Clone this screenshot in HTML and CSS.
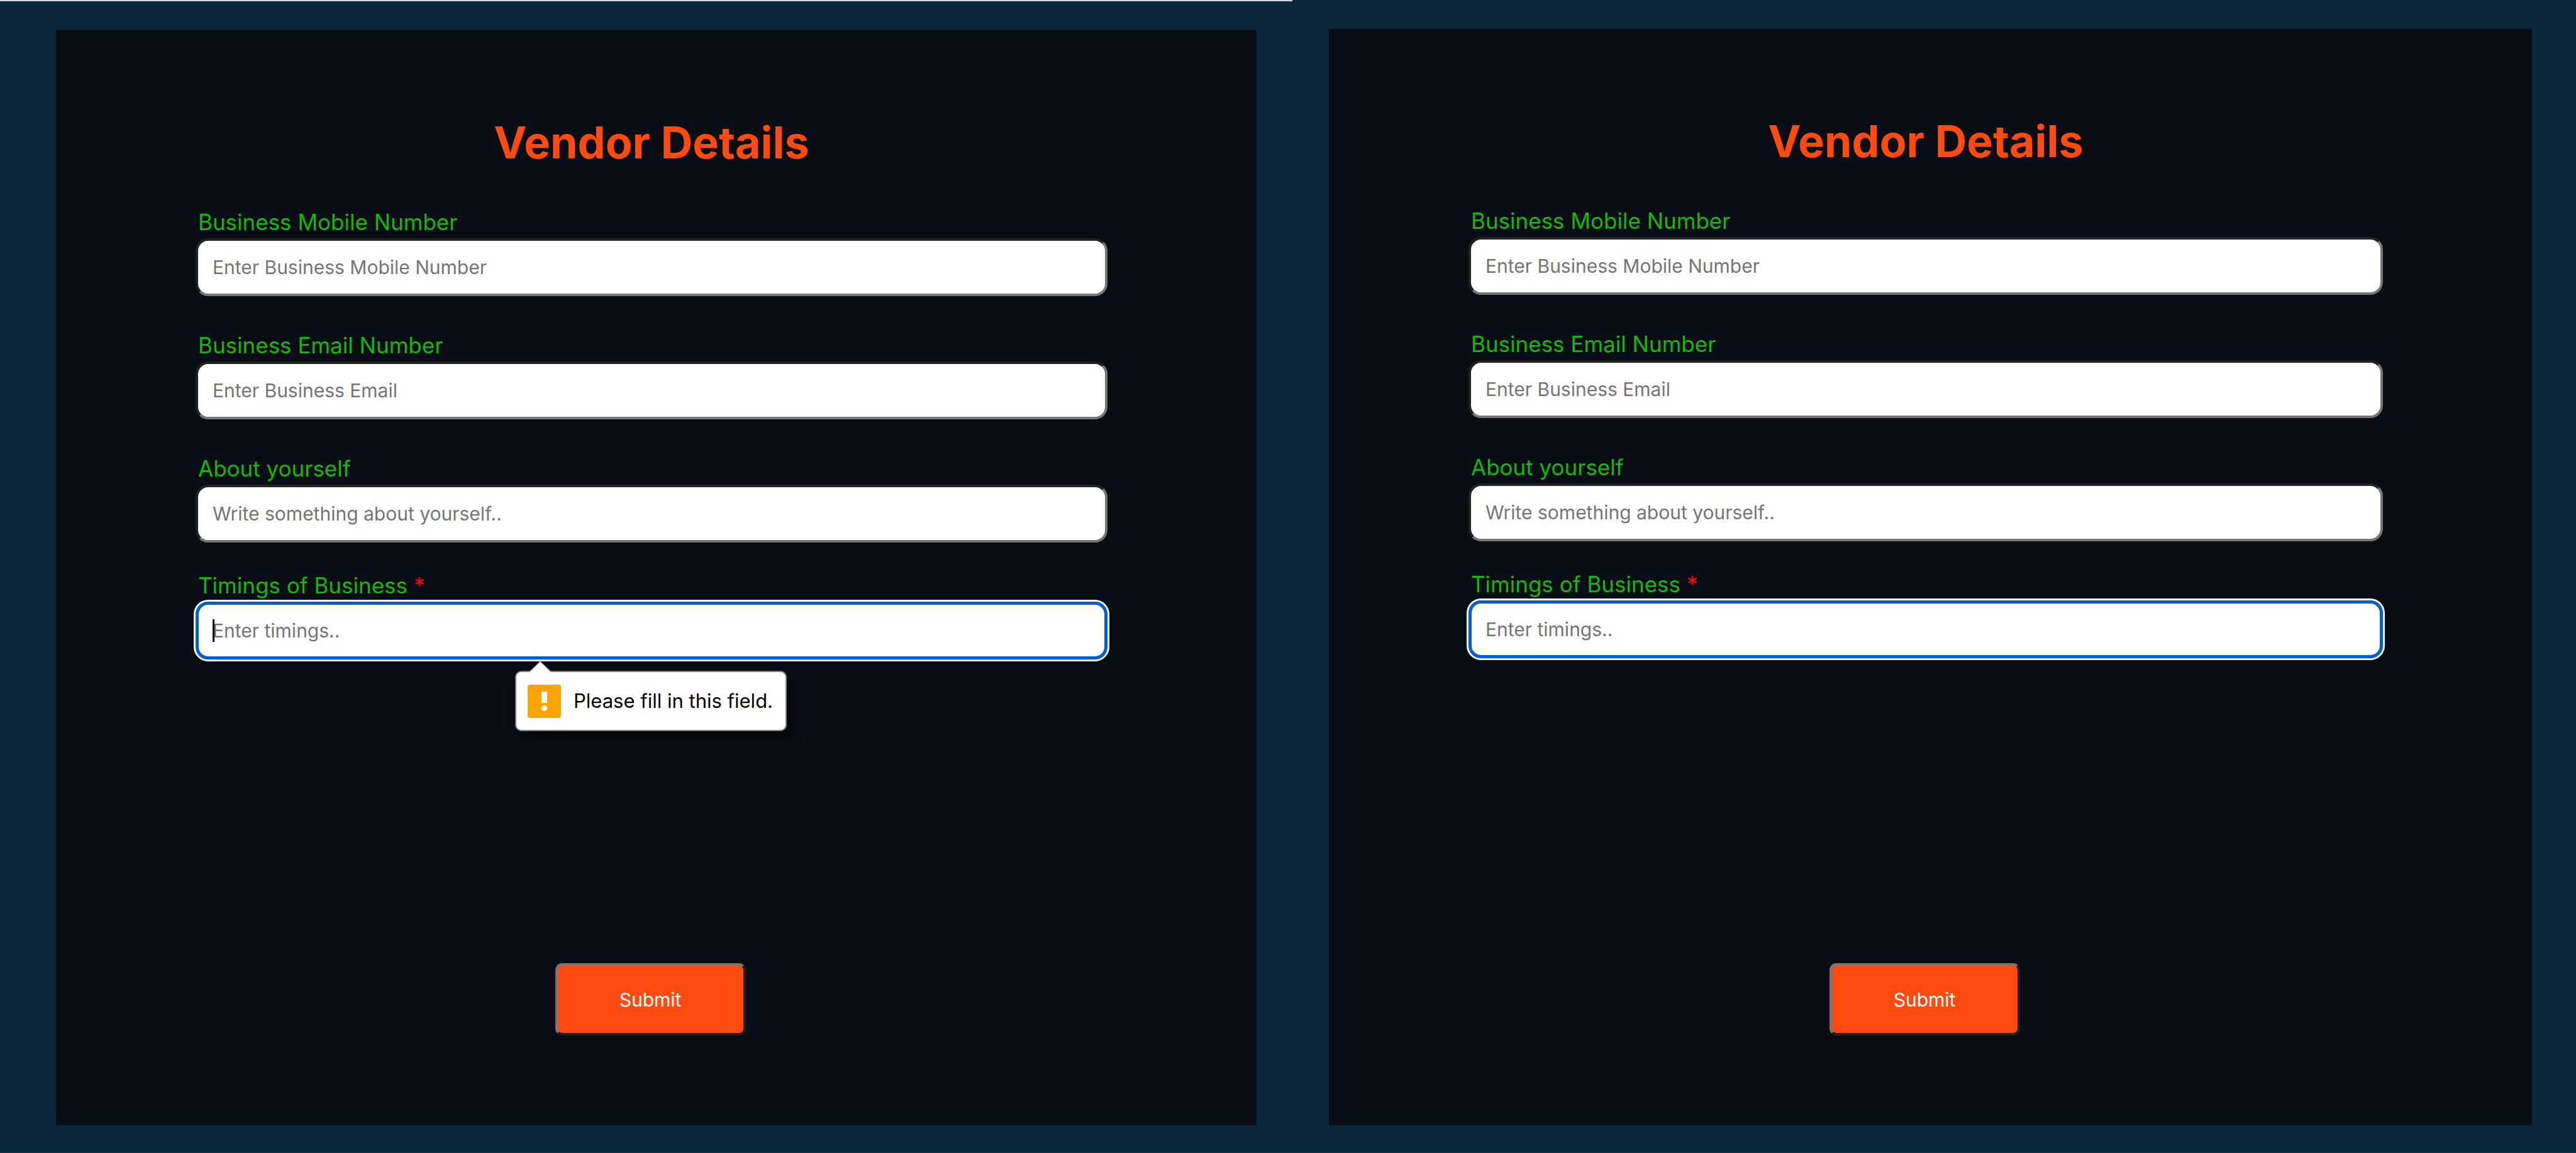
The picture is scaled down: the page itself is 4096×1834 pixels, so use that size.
FILE: index.html
```html
<!DOCTYPE html>
<html lang="en">
<head>
<meta charset="utf-8">
<title>Vendor Details</title>
<link rel="stylesheet" href="styles.css">
</head>
<body>
<main class="screens">
  <section class="screen screen-before">
    <form class="panel" novalidate>
      <h1 class="title">Vendor Details</h1>
      <div class="fields">
        <div class="field">
          <label for="mobile-a">Business Mobile Number</label>
          <input class="text-input" id="mobile-a" type="text" placeholder="Enter Business Mobile Number">
        </div>
        <div class="field">
          <label for="email-a">Business Email Number</label>
          <input class="text-input" id="email-a" type="text" placeholder="Enter Business Email">
        </div>
        <div class="field">
          <label for="about-a">About yourself</label>
          <input class="text-input" id="about-a" type="text" placeholder="Write something about yourself..">
        </div>
        <div class="field field-timings">
          <label for="timings-a">Timings of Business <span class="required">*</span></label>
          <input class="text-input is-active" id="timings-a" type="text" placeholder="Enter timings.." required>
          <span class="caret"></span>
          <div class="tooltip" role="alert">
            <svg class="tooltip-arrow" viewBox="0 0 38 20" aria-hidden="true"><path d="M0 20 19 1 38 20z" fill="#fff"/><path d="M1 18 19 1 37 18" fill="none" stroke="#808080" stroke-width="1"/></svg>
            <svg class="tooltip-icon" viewBox="0 0 53 53" aria-hidden="true"><rect width="53" height="53" rx="4" fill="#ffa400"/><path d="M22 11h9v18h-9z" fill="#fff"/><circle cx="26.500" cy="37.500" r="4.500" fill="#fff"/></svg>
            <span>Please fill in this field.</span>
          </div>
        </div>
      </div>
      <div class="actions"><button class="submit" type="submit">Submit</button></div>
    </form>
  </section>
  <section class="screen screen-after">
    <form class="panel" novalidate>
      <h1 class="title">Vendor Details</h1>
      <div class="fields">
        <div class="field">
          <label for="mobile-b">Business Mobile Number</label>
          <input class="text-input" id="mobile-b" type="text" placeholder="Enter Business Mobile Number">
        </div>
        <div class="field">
          <label for="email-b">Business Email Number</label>
          <input class="text-input" id="email-b" type="text" placeholder="Enter Business Email">
        </div>
        <div class="field">
          <label for="about-b">About yourself</label>
          <input class="text-input" id="about-b" type="text" placeholder="Write something about yourself..">
        </div>
        <div class="field field-timings">
          <label for="timings-b">Timings of Business <span class="required">*</span></label>
          <input class="text-input is-active" id="timings-b" type="text" placeholder="Enter timings.." required>
        </div>
      </div>
      <div class="actions"><button class="submit" type="submit">Submit</button></div>
    </form>
  </section>
</main>
</body>
</html>
```
FILE: styles.css
```css
*, *::before, *::after { box-sizing: border-box; }

body {
  margin: 0;
  background: #0c2739;
  font-family: Inter, "Liberation Sans", sans-serif;
}

.screens {
  display: grid;
  grid-template-columns: 2055fr 2041fr;
  min-height: 100vh;
}

.screen {
  display: flex;
  border-bottom: 1px solid #22364a;
}

.screen-before {
  border-top: 2px solid #d3d9dd;
  padding: 46px 57px 43px 89px;
}

.screen-after { padding: 46px 70px 43px 58px; }

.panel {
  flex: 1;
  display: flex;
  flex-direction: column;
  padding: 135px 237px 143px 222px;
  background: #090e15;
}

.title {
  margin: 0 0 61px;
  color: #ff4a10;
  font-size: 70px;
  font-weight: 700;
  line-height: 88px;
  text-align: center;
}

.fields {
  display: flex;
  flex-direction: column;
  gap: 57px;
}

.field {
  position: relative;
  display: flex;
  flex-direction: column;
  gap: 5px;
}

.field-timings { margin-top: -10px; }

.field label {
  padding-left: 4px;
  color: #14b90a;
  font-size: 35px;
  line-height: 42px;
}

.required { color: #ff0000; }

.text-input {
  width: 100%;
  height: 92px;
  padding: 0 23px;
  border: 4px solid;
  border-color: #222 #767676 #767676 #222;
  border-radius: 20px;
  background: #fff;
  color: #000;
  font: 400 30px/36px Inter, "Liberation Sans", sans-serif;
}

.text-input::placeholder { color: #757575; opacity: 1; }

.text-input.is-active {
  padding: 0 22px;
  border: 5px solid #005fcc;
  outline: 3px solid #fff;
}

.caret {
  position: absolute;
  left: 27px;
  bottom: 28px;
  width: 3px;
  height: 36px;
  background: #000;
}

.tooltip {
  position: absolute;
  top: 100%;
  left: 508px;
  display: flex;
  align-items: center;
  gap: 20px;
  height: 96px;
  margin-top: 18px;
  padding: 0 20px 0 18px;
  border: 2px solid #808080;
  border-radius: 10px;
  background: #fff;
  box-shadow: 8px 12px 20px rgba(0, 0, 0, 0.4);
  color: #000;
  font-size: 31px;
  line-height: 40px;
  white-space: nowrap;
}

.tooltip-arrow {
  position: absolute;
  left: 19px;
  bottom: 100%;
  width: 38px;
  height: 20px;
  margin-bottom: -2px;
}

.tooltip-icon { width: 53px; height: 53px; }

.actions {
  display: flex;
  justify-content: center;
  margin-top: auto;
  padding-right: 4px;
}

.submit {
  width: 303px;
  height: 115px;
  border: 4px solid;
  border-color: #767676 #222 #222 #767676;
  border-radius: 11px;
  background: #ff4a10;
  color: #fff;
  font: 400 30px/36px Inter, "Liberation Sans", sans-serif;
}
```
